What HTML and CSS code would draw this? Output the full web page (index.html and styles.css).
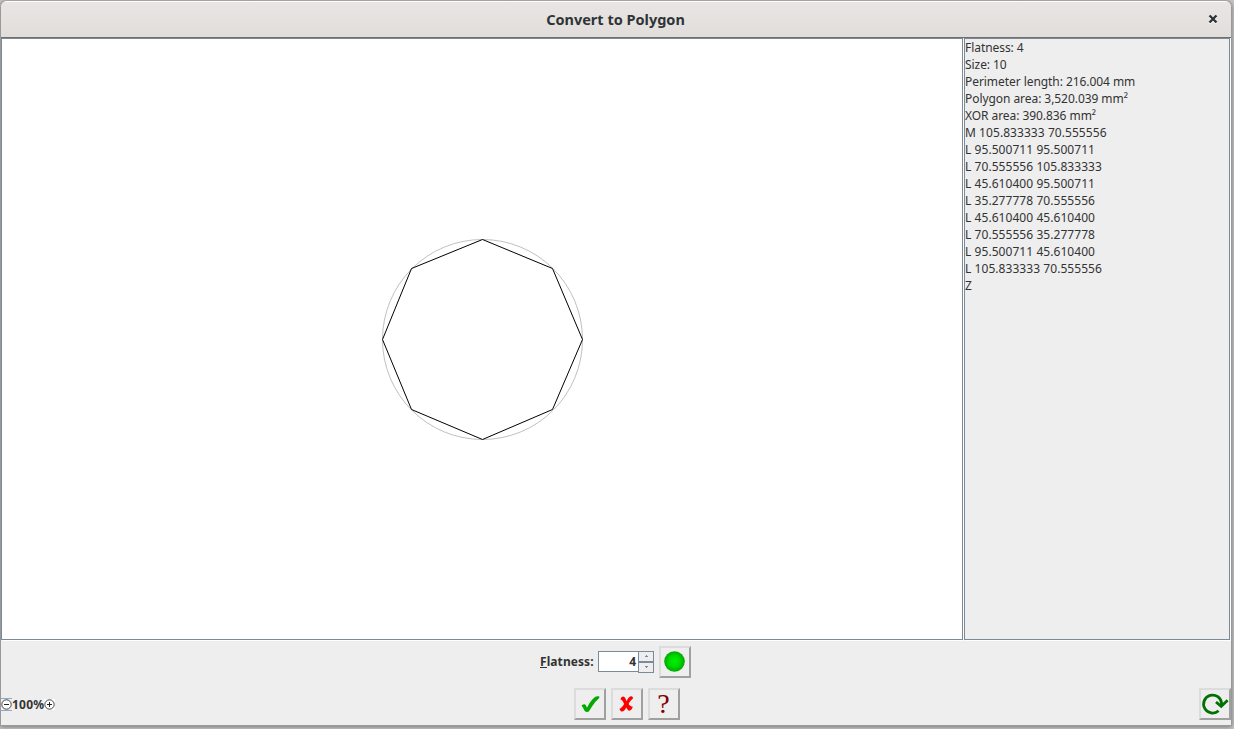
FILE: index.html
```
<!DOCTYPE html>
<html lang="en">
<head>
<meta charset="utf-8">
<title>Convert to Polygon</title>
<link rel="stylesheet" href="styles.css">
</head>
<body>
<div class="window">
  <header class="titlebar">
    <h1 class="title">Convert to Polygon</h1>
    <svg class="close" width="10" height="10" viewBox="0 0 10 10"><path class="close-light" d="M1.5 2.5L8.5 9.5M8.5 2.5L1.5 9.5"/><path class="close-dark" d="M1.5 1.5L8.5 8.5M8.5 1.5L1.5 8.5"/></svg>
  </header>
  <main class="content">
    <section class="pane canvas">
      <svg width="960" height="600" viewBox="2 39 960 600">
        <circle class="original" cx="482.5" cy="339.5" r="100"/>
        <path class="polygon" d="M582.5 339.5L552.5 409.5L482.5 439.5L411.5 409.5L382.5 339.5L411.5 268.5L482.5 239.5L552.5 268.5Z"/>
      </svg>
    </section>
    <section class="pane info">
      <div class="stats">
        <div>Flatness: 4</div>
        <div>Size: 10</div>
        <div>Perimeter length: 216.004 mm</div>
        <div>Polygon area: 3,520.039 mm²</div>
        <div>XOR area: 390.836 mm²</div>
      </div>
      <div class="points">
        <div>M 105.833333 70.555556</div>
        <div>L 95.500711 95.500711</div>
        <div>L 70.555556 105.833333</div>
        <div>L 45.610400 95.500711</div>
        <div>L 35.277778 70.555556</div>
        <div>L 45.610400 45.610400</div>
        <div>L 70.555556 35.277778</div>
        <div>L 95.500711 45.610400</div>
        <div>L 105.833333 70.555556</div>
        <div>Z</div>
      </div>
    </section>
  </main>
  <div class="controls">
    <label class="flat-label"><span class="mnemonic">F</span>latness:</label>
    <div class="spinner">
      <div class="value">4</div>
      <div class="steps">
        <div class="step"><svg width="5" height="3" viewBox="0 0 5 3"><path d="M2 0h1v1h1v1H1V1h1z"/></svg></div>
        <div class="step"><svg width="5" height="3" viewBox="0 0 5 3"><path d="M1 0h3v1H3v1H2V1H1z"/></svg></div>
      </div>
    </div>
    <div class="button">
      <svg width="28" height="28" viewBox="0 0 28 28">
        <defs><radialGradient id="led"><stop offset="0" stop-color="#00f000"/><stop offset="0.5" stop-color="#00dc00"/><stop offset="1" stop-color="#00a800"/></radialGradient></defs>
        <circle cx="13.5" cy="13.5" r="10.3" fill="url(#led)"/>
      </svg>
    </div>
  </div>
  <footer class="footer">
    <div class="zoom">
      <svg class="zoom-out" width="11" height="13" viewBox="0 0 11 13"><path class="focus" d="M0 .5H11M0 12.5H11"/><circle cx="5.5" cy="6.5" r="4.7"/><path d="M3 6.5H8"/></svg>
      <span class="percent">100%</span>
      <svg class="zoom-in" width="11" height="13" viewBox="0 0 11 13"><path class="back" d="M0 1H11V12H0z"/><circle cx="5.5" cy="6.5" r="4.7"/><path d="M3 6.5H8M5.5 4V9"/></svg>
    </div>
    <div class="actions">
      <div class="button"><svg width="28" height="28" viewBox="0 0 28 28"><path fill="#00aa00" d="M5.6 16C6 14.2 9 13.2 10 15.5L11 17.8C13 13.3 16 9 19 7C20.2 6.2 22.8 6.1 23.4 6.8C23.6 7.6 23 8.4 22.3 9C18.5 12.3 16 16.3 13.5 20.5C12.3 22.5 9.3 22.5 8.4 20.6C7.6 18.8 7 17 5.6 16Z"/></svg></div>
      <div class="button"><svg width="28" height="28" viewBox="0 0 28 28"><path fill="#ff0000" d="M7.5 9.2C8.5 5.7 11.7 5.5 12.7 9L13.5 11.2C15 8.5 16.4 6 18.3 6.3C19.7 6.5 19.7 7.7 20.2 8.2C18.4 9.6 16.8 11.6 15.6 13.9C16.8 15.8 18.4 16.5 19.8 16.8C19 20.6 15.7 22.2 14 18.8L13.3 17.5C12 20 10.8 21.8 8.4 21.4C7 21.1 7.2 19.6 6.3 19.1C8.2 18 9.7 16.2 11.1 13.9C10.3 11.8 9.2 10 7.5 9.2Z"/></svg></div>
      <div class="button question">?</div>
    </div>
    <div class="button refresh"><svg width="28" height="28" viewBox="0 0 28 28"><path d="M17.6 20.8A9 9 0 1 1 20.6 13.5L20.5 16.5M15 12L20.2 16.4L26.6 10.3"/></svg></div>
  </footer>
</div>
</body>
</html>
```
FILE: styles.css
```
* { box-sizing: border-box; }
body {
  margin: 0;
  width: 1234px;
  height: 729px;
  overflow: hidden;
  background: #c8c8c8;
  font: 12px/17px "Noto Sans", sans-serif;
  color: #333;
}
svg { display: block; }
.window {
  width: 1232px;
  height: 726px;
  border: 1px solid #999;
  border-top-color: #a5a1a0;
  border-radius: 7px 7px 0 0;
  background: #eee;
  box-shadow: 0 1px 5px #777;
  display: flex;
  flex-direction: column;
  overflow: hidden;
}
.titlebar {
  height: 37px;
  flex: none;
  display: flex;
  align-items: center;
  justify-content: flex-end;
  padding: 0 13px 0 0;
  border-top: 1px solid #fff;
  border-bottom: 1px solid #736e6b;
  background: linear-gradient(#e8e6e3, #e1ddda);
}
.title {
  flex: 1;
  margin: 0;
  padding: 0 0 2px 22px;
  text-align: center;
  font-size: 14.5px;
  font-weight: 700;
  line-height: 20px;
  color: #2e3436;
}
.close { fill: none; stroke-width: 2.4; margin-bottom: 2px; }
.close-light { stroke: #fff; }
.close-dark { stroke: #2e3436; }
.content {
  display: flex;
  flex: none;
  height: 603px;
}
.pane {
  border: 1px solid #7a8a99;
  box-shadow: 1px 1px 0 #fff;
  height: 602px;
}
.canvas { width: 962px; margin-right: 1px; background: #fff; }
.info { width: 266px; white-space: nowrap; }
.stats { letter-spacing: -0.06px; }
.points { letter-spacing: 0.06px; }
.original { fill: none; stroke: #c0c0c0; }
.polygon { fill: none; stroke: #000; }
.controls {
  height: 32px;
  margin-top: 5px;
  flex: none;
  display: flex;
  align-items: center;
  padding-left: 539px;
}
.flat-label, .percent, .value { font-weight: 700; }
.flat-label { width: 58px; padding-bottom: 2px; letter-spacing: 0.08px; }
.mnemonic { border-bottom: 1px solid #333; display: inline-block; height: 15px; line-height: 17px; }
.percent { letter-spacing: 0.25px; }
.spinner {
  width: 56px;
  height: 22px;
  display: flex;
  margin-right: 5px;
}
.value {
  width: 40px;
  height: 21px;
  background: #fff;
  border: 1px solid #7a8a99;
  border-right: 0;
  box-shadow: inset 1px -1px 0 #fff;
  line-height: 20px;
  padding-right: 2px;
  text-align: right;
}
.steps { width: 16px; }
.step {
  height: 11px;
  border: 1px solid #7a8a99;
  display: flex;
  align-items: center;
  justify-content: center;
}
.step path { fill: #7a8a99; }
.button {
  width: 32px;
  height: 32px;
  flex: none;
  border: 2px solid;
  border-color: #dcdcdc #a0a0a0 #a0a0a0 #dcdcdc;
  background: #eee;
}
.footer {
  display: grid;
  grid-template-columns: 573px 1fr 32px;
  height: 32px;
  margin-top: 10px;
  flex: none;
}
.zoom { display: flex; align-items: center; }
.zoom circle { fill: #fff; stroke: #444; }
.zoom path { fill: none; stroke: #222; }
.zoom .focus { stroke: #8fa9c8; }
.zoom .back { fill: #fff; stroke: none; }
.actions { display: flex; gap: 5px; }
.question {
  color: #800000;
  font: 28px/28px "Liberation Serif", serif;
  text-align: center;
  padding-right: 1px;
}
.refresh path { fill: none; stroke: #007000; stroke-width: 2.8; }
```
